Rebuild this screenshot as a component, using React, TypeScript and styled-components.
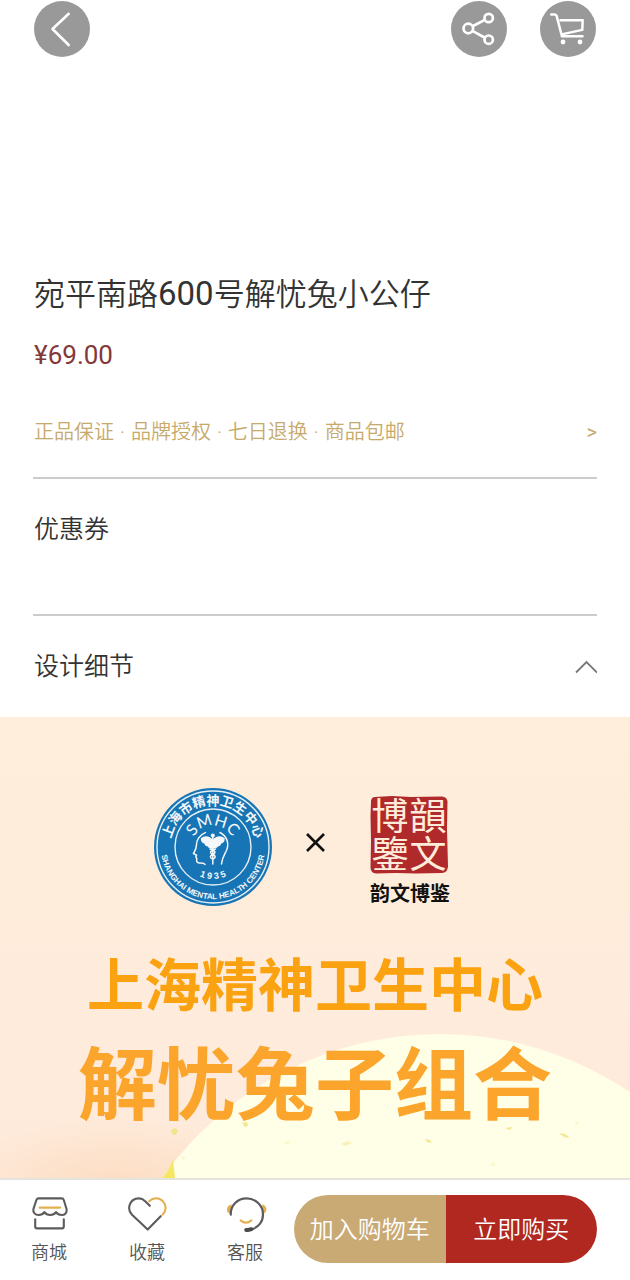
import React from "react";
import styled, { createGlobalStyle } from "styled-components";

const GlobalStyle = createGlobalStyle`
  * { box-sizing: border-box; }
  body {
    margin: 0;
    background: #fff;
    color: #333;
    font-family: Roboto, "Noto Sans CJK SC", sans-serif;
    font-weight: 350;
  }
  h1, h2, p { margin: 0; font-weight: inherit; }
  button { border: 0; padding: 0; font: inherit; color: inherit; background: none; cursor: pointer; }
  svg { display: block; }
`;

const Page = styled.main`
  display: flex;
  flex-direction: column;
  min-height: 100vh;
`;

const TopBar = styled.header`
  display: flex;
  gap: 33px;
  height: 272px;
  padding: 1px 34px 0;
`;

const RoundButton = styled.button<{ $pushRight?: boolean }>`
  width: 56px;
  height: 56px;
  margin-left: ${(p) => (p.$pushRight ? "auto" : "0")};
  border-radius: 50%;
  background: #999;
`;

const Info = styled.section`
  padding: 0 33px;
`;

const Title = styled.h1`
  padding-left: 1px;
  font-size: 31px;
  line-height: 44px;
`;

const Digits = styled.span`
  font-size: 33px;
  font-weight: 400;
`;

const Price = styled.p`
  margin-top: 19px;
  padding-left: 1px;
  font-size: 26px;
  line-height: 38px;
  font-weight: 400;
  color: #833838;
`;

const Promise = styled.a`
  display: flex;
  justify-content: space-between;
  margin-top: 43px;
  padding: 0 0 30px 1px;
  border-bottom: 2px solid #ccc;
  font-size: 20px;
  line-height: 30px;
  color: #c6a96b;
  text-decoration: none;
`;

const Claims = styled.span`
  display: flex;
  gap: 6px;
`;

const Arrow = styled.span`
  font-weight: 400;
`;

const Coupons = styled.div`
  height: 137px;
  padding-top: 32px;
  border-bottom: 2px solid #ccc;
`;

const SectionTitle = styled.h2`
  padding-left: 1px;
  font-size: 25px;
  line-height: 38px;
`;

const Toggle = styled.button`
  display: flex;
  align-items: center;
  justify-content: space-between;
  width: 100%;
  height: 101px;
  text-align: left;
`;

const Banner = styled.section`
  position: relative;
  flex: 1;
  overflow: hidden;
  padding-top: 71px;
  background: linear-gradient(#ffeedc, #feeadb);
`;

const Backdrop = styled.svg`
  position: absolute;
  inset: 0;
  width: 100%;
  height: 100%;
`;

const BannerBody = styled.div`
  position: relative;
  display: flex;
  flex-direction: column;
  align-items: center;
`;

const Brands = styled.div`
  display: flex;
  align-items: flex-start;
  height: 118px;
  margin-right: 26px;
`;

const Cross = styled.svg`
  margin: 44px 44px 0 33px;
`;

const Publisher = styled.div`
  padding-top: 8px;
`;

const SealMark = styled.svg`
  overflow: visible;
`;

const PublisherName = styled.p`
  margin-top: 5px;
  font-size: 20px;
  line-height: 30px;
  font-weight: 700;
  color: #111;
`;

const BannerTitle = styled.h2<{ $large?: boolean }>`
  margin-top: ${(p) => (p.$large ? "8px" : "41px")};
  font-size: ${(p) => (p.$large ? "79px" : "57px")};
  line-height: ${(p) => (p.$large ? "104px" : "80px")};
  font-weight: 700;
  color: ${(p) => (p.$large ? "#fba52c" : "#fba211")};
  white-space: nowrap;
`;

const Footer = styled.footer`
  display: flex;
  height: 102px;
  padding: 15px 33px 0 0;
  border-top: 2px solid #e5e3dd;
  background: #fff;
`;

const Nav = styled.nav`
  display: flex;
  width: 294px;
`;

const NavItem = styled.a`
  display: flex;
  flex: 1;
  flex-direction: column;
  align-items: center;
  gap: 6px;
  font-size: 18px;
  line-height: 28px;
  color: #555;
  text-decoration: none;
  svg { margin: -2px 0 0 2px; }
`;

const Actions = styled.div`
  display: flex;
  flex: 1;
  height: 68px;
  border-radius: 34px;
  overflow: hidden;
`;

const Action = styled.button<{ $tone: string }>`
  flex: 1;
  padding-bottom: 3px;
  background: ${(p) => p.$tone};
  color: #fff;
  font-size: 24px;
  white-space: nowrap;
`;

const BackIcon = () => (
  <svg width="56" height="56" fill="none" stroke="#fff" strokeWidth="2.6" strokeLinecap="round" strokeLinejoin="round">
    <path d="M34.7 12.8 18.5 28l16.2 16" />
  </svg>
);

const ShareIcon = () => (
  <svg width="56" height="56" fill="none" stroke="#fff" strokeWidth="2.7">
    <circle cx="17.3" cy="27.5" r="4.8" />
    <circle cx="37.7" cy="17" r="4.2" />
    <circle cx="37.7" cy="38.7" r="4.2" />
    <path d="m21.6 25.2 12.2-6.3M21.4 29.9l12.6 6.8" />
  </svg>
);

const CartIcon = () => (
  <svg width="56" height="56" fill="none" stroke="#fff" strokeWidth="2.5" strokeLinecap="round" strokeLinejoin="round">
    <path d="M11.3 13.5h3.6q1.4 0 1.8 1.6l5.2 20.2H42.5M20.5 19.300h22.200l-.4 9.600-19.500 4.200" />
    <circle cx="23" cy="41" r="1.4" fill="#fff" strokeWidth="2" />
    <circle cx="40" cy="41" r="1.4" fill="#fff" strokeWidth="2" />
  </svg>
);

const ChevronUp = () => (
  <svg width="24" height="16" fill="none" stroke="#777" strokeWidth="1.8">
    <path d="M3 13.5 13.5 3 24 13.5" />
  </svg>
);

const ShopIcon = () => (
  <svg width="42" height="40" fill="none" stroke="#5c5c5c" strokeWidth="2.1" strokeLinecap="round" strokeLinejoin="round">
    <path d="M9.600 5.400h23q1.600 0 2.200 1.600l2.800 9.200c.6 3.600-1.800 5.800-4.800 5.800-2.600 0-4.600-1-5.800-2.800-1.200 1.800-3.200 2.800-5.800 2.800s-4.600-1-5.800-2.800C14.200 21 12.200 22 9.600 22c-3.400 0-5.800-2.400-5.200-5.800L7.400 7q.6-1.600 2.200-1.600Z" />
    <path d="M6.200 26.200v7.400q0 1.800 1.800 1.800h25q1.800 0 1.800-1.800v-7.400" />
    <path d="M10.600 14.600h20.600" stroke="#e4b04f" />
  </svg>
);

const HeartIcon = () => (
  <svg width="42" height="40" fill="none" stroke="#5c5c5c" strokeWidth="2.1" strokeLinecap="round" strokeLinejoin="round">
    <path d="m33.700 23.200-13 13.400L5 21.800C-.6 16 2.600 5.500 11.800 5.400c3 0 4.800 1.200 6.400 2.800l4.600 4.600" />
    <path d="M22.200 8.200c4.200-4 10.200-3.800 13.800.2 3.400 4 3.600 8.600-.4 13.200" stroke="#e4b04f" />
  </svg>
);

const ServiceIcon = () => (
  <svg width="42" height="40" fill="none" strokeLinecap="round">
    <path d="M6.800 11.400C.4 12 .6 20.600 5.800 21ZM37 11.400c6 .8 5.600 8.400.8 9.400Z" fill="#e4b04f" />
    <path d="M15.600 27.400q5.400 4.600 10.800 0" stroke="#e4b04f" strokeWidth="2.1" />
    <path d="M5.800 21.600C5.400 12.400 12.600 5.400 21.600 5.400S38 12.500 38 21.400c0 7-4.200 12.800-10.800 14.800" stroke="#5c5c5c" strokeWidth="2.2" />
    <path d="M21.200 37q2.400.2 5.200-.8" stroke="#4a4a4a" strokeWidth="4" />
  </svg>
);

const HospitalLogo = () => (
  <svg width="118" height="118" viewBox="0 0 118 118" role="img" aria-label="SMHC">
    <defs>
      <path id="ringTop" d="M18.500 74A43 43 0 1 1 99.500 74" />
      <path id="ringBottom" d="M6.800 59A52.200 52.200 0 0 0 111.200 59" />
      <path id="nameArc" d="M37.500 59A21.500 21.500 0 0 1 80.500 59" />
      <path id="yearArc" d="M27 59A32 32 0 0 0 91 59" />
    </defs>
    <circle cx="59" cy="59" r="59" fill="#1775b5" />
    <g fill="none" stroke="#e6f0f5">
      <circle cx="59" cy="59" r="56" strokeWidth="1.4" />
      <circle cx="59" cy="59" r="38" strokeWidth="1.4" />
    </g>
    <g fill="#f5f8fa" textAnchor="middle">
      <text fontSize="13" fontWeight="700" fontFamily="'Noto Sans CJK SC', sans-serif">
        <textPath href="#ringTop" startOffset="50%">上海市精神卫生中心</textPath>
      </text>
      <text fontSize="8" fontWeight="700" fontFamily="'Liberation Sans', sans-serif">
        <textPath href="#ringBottom" startOffset="50%">SHANGHAI MENTAL HEALTH CENTER</textPath>
      </text>
      <text fontSize="16" fontWeight="400" fontFamily="Lato, sans-serif">
        <textPath href="#nameArc" startOffset="50%">SMHC</textPath>
      </text>
      <text fontSize="9" fontWeight="700" fontFamily="'Liberation Sans', sans-serif">
        <textPath href="#yearArc" startOffset="50%">1 9 3 5</textPath>
      </text>
    </g>
    <g fill="none" stroke="#f5f8fa" strokeWidth="1.5" strokeLinecap="round" strokeLinejoin="round">
      <path d="M51 76.500c-1-2-3-1.600-6-1.600-2.600-.2-2.600-2-2.200-4.200l-1-2 .8-1.600-3.200-1.600c1.600-3 3-4.400 3-8.300 0-4.800 3-10.400 9-12.600" />
      <path d="M66 44.500c7.500 3.800 9.600 12 6 19-2.600 4.600-4 6.500-4.500 12.500" />
      <path d="M58.800 47v29M56 61c6 1.800 6 4 2.800 5.200-3.200 1.400-3.200 3.600 0 5M61.500 61c-6 1.800-6 4-2.700 5.200 3.200 1.400 3.200 3.600 0 5" />
    </g>
    <path d="M58.800 52c-3-4-8-5-12-1.500 0 3 1.500 4.500 3.500 5 .5 2 2 3 3.500 3 .5 1.500 2.500 2.500 5 2s4.500-.5 5-2c1.500 0 3-1 3.500-3 2-.5 3.500-2 3.500-5-4-3.500-9-2.500-12 1.500Z" fill="#f5f8fa" />
    <circle cx="58.800" cy="47.500" r="2" fill="#f5f8fa" />
  </svg>
);

const Seal = () => (
  <SealMark width="78" height="78" viewBox="0 0 78 78" role="img" aria-label="韻文博鑒">
    <path d="M5 1 22 0l19 1 31-.5q5 .5 5.500 5l-.5 27 1 38q-.5 6-6 6.500l-26 .5-20-.5-20 .5q-5-.5-5.500-5.500L1 45l-.5-25L1 5q.5-4 4-4Z" fill="#b02a2b" />
    <g fill="#feecdb" fontSize="37" fontWeight="400" fontFamily="'Noto Sans CJK TC', 'Noto Sans CJK SC', sans-serif" textAnchor="middle">
      <text x="20" y="34">博</text>
      <text x="58" y="34">韻</text>
      <text x="20" y="72">鑒</text>
      <text x="58" y="72">文</text>
    </g>
  </SealMark>
);

const Scenery = () => (
  <Backdrop viewBox="0 0 630 461" preserveAspectRatio="xMidYMin slice" aria-hidden="true">
    <defs>
      <radialGradient id="glow">
        <stop offset="0" stopColor="#fbd2ac" stopOpacity="0.6" />
        <stop offset="1" stopColor="#fbd2ac" stopOpacity="0" />
      </radialGradient>
    </defs>
    <ellipse cx="115" cy="475" rx="170" ry="75" fill="url(#glow)" />
    <circle cx="440" cy="657" r="340" fill="#fffee6" />
    <path d="M162 461q6-6 11-18l2 18Z" fill="#f5e663" />
    <g fill="#efe27a">
      <path d="m171 413 4-2 3 2-2 5-4-1ZM242 406l5-1 1 4-3 1ZM425 422l5 1 2 3-5-1ZM505 411l7-1-2 3ZM559 416l6 1 5 4-6-1Z" opacity="0.8" />
      <path d="m341 427 6-3 5 2-6 3Z" opacity="0.4" />
      <path d="m284 425 5-1 2 2-5 1ZM490 448l5-3v4ZM181 439l5 1-3 3ZM575 404l4 2-3 2Z" opacity="0.25" />
    </g>
  </Backdrop>
);

const claims = ["正品保证", "品牌授权", "七日退换", "商品包邮"];

export default function App() {
  return (
    <Page>
      <GlobalStyle />
      <TopBar>
        <RoundButton aria-label="返回"><BackIcon /></RoundButton>
        <RoundButton aria-label="分享" $pushRight><ShareIcon /></RoundButton>
        <RoundButton aria-label="购物车"><CartIcon /></RoundButton>
      </TopBar>

      <Info>
        <Title>宛平南路<Digits>600</Digits>号解忧兔小公仔</Title>
        <Price>¥69.00</Price>
        <Promise href="#promise">
          <Claims>
            {claims.map((claim, i) => (
              <React.Fragment key={claim}>
                {i > 0 && <span>·</span>}
                <span>{claim}</span>
              </React.Fragment>
            ))}
          </Claims>
          <Arrow>&gt;</Arrow>
        </Promise>
        <Coupons>
          <SectionTitle>优惠券</SectionTitle>
        </Coupons>
        <Toggle aria-expanded="true" aria-labelledby="detail-title">
          <SectionTitle as="span" id="detail-title">设计细节</SectionTitle>
          <ChevronUp />
        </Toggle>
      </Info>

      <Banner>
        <Scenery />
        <BannerBody>
          <Brands>
            <HospitalLogo />
            <Cross width="21" height="21" stroke="#111" strokeWidth="2.6" aria-hidden="true">
              <path d="m2 2 17 17M19 2 2 19" />
            </Cross>
            <Publisher>
              <Seal />
              <PublisherName>韵文博鉴</PublisherName>
            </Publisher>
          </Brands>
          <BannerTitle>上海精神卫生中心</BannerTitle>
          <BannerTitle $large>解忧兔子组合</BannerTitle>
        </BannerBody>
      </Banner>

      <Footer>
        <Nav>
          <NavItem href="#shop"><ShopIcon />商城</NavItem>
          <NavItem href="#favorites"><HeartIcon />收藏</NavItem>
          <NavItem href="#service"><ServiceIcon />客服</NavItem>
        </Nav>
        <Actions>
          <Action $tone="#c9a974">加入购物车</Action>
          <Action $tone="#b0281f">立即购买</Action>
        </Actions>
      </Footer>
    </Page>
  );
}
